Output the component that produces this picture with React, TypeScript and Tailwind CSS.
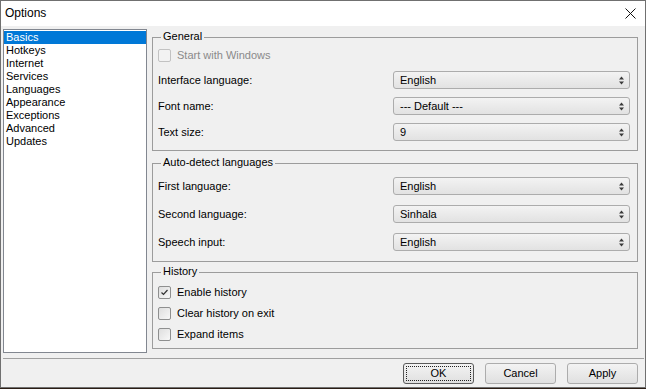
import React from 'react'

const pages = ['Basics', 'Hotkeys', 'Internet', 'Services', 'Languages', 'Appearance', 'Exceptions', 'Advanced', 'Updates']

function Arrows() {
  return (
    <svg width="5" height="9" viewBox="0 0 5 9" className="shrink-0">
      <polygon points="2.5,0.5 5,3.5 0,3.5" fill="#3a3a3a" />
      <polygon points="0,5.5 5,5.5 2.5,8.5" fill="#3a3a3a" />
    </svg>
  )
}

function Combo({ value }: { value: string }) {
  return (
    <div className="flex h-[18px] w-[237px] items-center justify-between rounded-[3px] border border-[#acacac] bg-linear-to-b from-[#f3f3f3] to-[#e2e2e2] pl-[6px] pr-[5px]">
      <span>{value}</span>
      <Arrows />
    </div>
  )
}

function Row({ label, value }: { label: string; value: string }) {
  return (
    <div className="flex h-[18px] items-center justify-between">
      <span>{label}</span>
      <Combo value={value} />
    </div>
  )
}

function CheckBox({ label, checked = false, disabled = false }: { label: string; checked?: boolean; disabled?: boolean }) {
  return (
    <div className="flex h-[18px] items-center gap-[6px] pl-[-1px]">
      <div
        className={
          disabled
            ? 'flex h-[13px] w-[13px] items-center justify-center rounded-[2px] border border-[#c2c2c2] bg-[#f2f2f2]'
            : 'flex h-[13px] w-[13px] items-center justify-center rounded-[2px] border border-[#8e8f8f] bg-linear-to-br from-[#dedede] to-[#f8f8f8]'
        }
      >
        {checked && (
          <svg width="9" height="9" viewBox="0 0 9 9">
            <polyline points="1.5,4.5 3.5,6.5 7.5,2" fill="none" stroke="#333" strokeWidth="1.2" />
          </svg>
        )}
      </div>
      <span className={disabled ? 'text-[#8a8a8a]' : ''}>{label}</span>
    </div>
  )
}

function Group({ title, className, children }: { title: string; className: string; children: React.ReactNode }) {
  return (
    <div className={'relative border border-[#9c9c9c] pl-[5px] pr-[7px] ' + className}>
      <span className="absolute -top-[8px] left-[8px] bg-[#f0f0f0] px-[2px] leading-[13px]">{title}</span>
      {children}
    </div>
  )
}

function Button({ label, focused = false }: { label: string; focused?: boolean }) {
  return (
    <div
      className={
        focused
          ? 'flex h-[21px] w-[71px] items-center justify-center rounded-[3px] border border-[#5a5a5a] bg-linear-to-b from-[#f3f3f3] to-[#e0e0e0] p-[2px]'
          : 'flex h-[21px] w-[71px] items-center justify-center rounded-[3px] border border-[#acacac] bg-linear-to-b from-[#f3f3f3] to-[#e0e0e0]'
      }
    >
      {focused ? (
        <div className="flex h-full w-full items-center justify-center border border-dotted border-[#222]">{label}</div>
      ) : (
        label
      )}
    </div>
  )
}

export default function App() {
  return (
    <div className="h-[389px] w-[646px] bg-[#2b1d14] font-['Liberation_Sans',Arial,sans-serif] text-[11px] leading-[13px] text-black">
      <div className="flex h-[388px] flex-col border border-[#707070] bg-[#f0f0f0]">
        {/* Title bar */}
        <div className="flex h-[25px] shrink-0 items-center justify-between bg-white pl-[4px] pr-[9px]">
          <span className="text-[12px]">Options</span>
          <svg width="11" height="11" viewBox="0 0 11 11">
            <path d="M0.5 0.5 L10.5 10.5 M10.5 0.5 L0.5 10.5" stroke="#111" strokeWidth="1" />
          </svg>
        </div>

        {/* Body */}
        <div className="flex gap-[5px] pl-[2px] pt-[3px]">
          <div className="h-[324px] w-[144px] border border-[#828790] bg-white pt-[1px]">
            {pages.map((p, i) => (
              <div key={p} className={i === 0 ? 'h-[13px] bg-[#0078d7] pl-[2px] text-white' : 'h-[13px] pl-[2px]'}>
                {p}
              </div>
            ))}
          </div>

          <div className="flex w-[486px] flex-col pt-[8px]">
            <Group title="General" className="h-[114px] pt-[8px]">
              <CheckBox label="Start with Windows" disabled />
              <div className="mt-[7px] flex flex-col gap-[8px]">
                <Row label="Interface language:" value="English" />
                <Row label="Font name:" value="--- Default ---" />
                <Row label="Text size:" value="9" />
              </div>
            </Group>

            <Group title="Auto-detect languages" className="mt-[12px] h-[99px] pt-[13px]">
              <div className="flex flex-col gap-[10px]">
                <Row label="First language:" value="English" />
                <Row label="Second language:" value="Sinhala" />
                <Row label="Speech input:" value="English" />
              </div>
            </Group>

            <Group title="History" className="mt-[10px] h-[77px] pt-[10px]">
              <div className="flex flex-col gap-[3px]">
                <CheckBox label="Enable history" checked />
                <CheckBox label="Clear history on exit" />
                <CheckBox label="Expand items" />
              </div>
            </Group>
          </div>
        </div>

        <div className="ml-[2px] mr-[1px] mt-[5px] h-px bg-[#a0a0a0]" />

        <div className="flex justify-end gap-[11px] pr-[7px] pt-[4px]">
          <Button label="OK" focused />
          <Button label="Cancel" />
          <Button label="Apply" />
        </div>
      </div>
    </div>
  )
}
